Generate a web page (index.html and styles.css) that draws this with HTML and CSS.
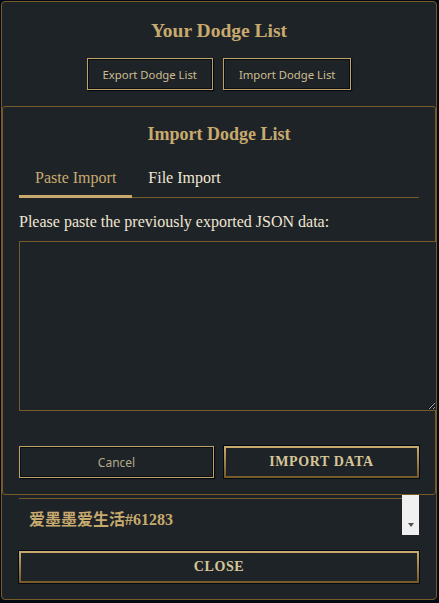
FILE: index.html
```html
<!DOCTYPE html>
<html lang="en">
<head>
    <meta charset="UTF-8">
    <meta name="viewport" content="width=device-width, initial-scale=1.0">
    <title>Dodge List</title>
    <link rel="stylesheet" href="styles.css">
</head>
<body>
    <div class="dodge-panel">
        <!-- Header -->
        <div class="panel-header">
            <h1>Your Dodge List</h1>
            <div class="header-buttons">
                <button class="small-btn">Export Dodge List</button>
                <button class="small-btn">Import Dodge List</button>
            </div>
        </div>

        <!-- Dodge List -->
        <div class="dodge-list">
            <div class="list-items">
                <div class="list-item">爱墨墨爱生活#61283</div>
            </div>
            <div class="scrollbar"><span class="scroll-arrow"></span></div>
        </div>

        <button class="gold-btn">Close</button>

        <!-- Import Modal -->
        <div class="import-modal">
            <h2>Import Dodge List</h2>
            <div class="tabs">
                <div class="tab active">Paste Import</div>
                <div class="tab">File Import</div>
            </div>
            <label class="paste-label" for="importData">Please paste the previously exported JSON data:</label>
            <textarea id="importData"></textarea>
            <div class="modal-buttons">
                <button class="small-btn">Cancel</button>
                <button class="gold-btn">Import Data</button>
            </div>
        </div>
    </div>
</body>
</html>
```

FILE: styles.css
```css
* {
    box-sizing: border-box;
}

body {
    margin: 0;
    background: #010a13;
    font-family: "Liberation Serif", "Noto Sans CJK SC", serif;
}

.dodge-panel {
    position: relative;
    width: 436px;
    height: 599px;
    margin: 1px 0 0 1px;
    padding: 0 17px 16px;
    display: flex;
    flex-direction: column;
    background: #1e2328;
    border: 1px solid #785a28;
    border-radius: 4px;
}

.panel-header {
    padding: 17px 0 16px;
    text-align: center;
}

.panel-header h1 {
    margin: 0;
    font-size: 19.5px;
    line-height: 24px;
    color: #c8aa6e;
}

.header-buttons {
    margin-top: 15px;
    display: flex;
    justify-content: center;
    gap: 10px;
}

/* Buttons */
.small-btn {
    height: 32px;
    padding: 0 15px;
    background: #1e2328;
    color: #cdbe91;
    border: 1px solid #c0a264;
    box-shadow: inset 0 0 0 1px #0a0e13, 1px 1px 1px #010a13;
    font-family: "Noto Sans", sans-serif;
    font-size: 11.3px;
    cursor: pointer;
}

.gold-btn {
    height: 32px;
    padding: 0;
    background: #1e2328;
    color: #d6c597;
    border: 2px solid #c8aa6e;
    border-image: linear-gradient(to bottom, #c8aa6e, #785a28) 1;
    box-shadow: 0 0 0 1px #010a13;
    font-family: "Liberation Serif", serif;
    font-weight: bold;
    font-size: 14px;
    letter-spacing: 0.6px;
    text-transform: uppercase;
    cursor: pointer;
}

.dodge-panel > .gold-btn {
    margin-top: 16px;
}

/* List */
.dodge-list {
    flex: 1;
    min-height: 0;
    display: flex;
}

.list-items {
    flex: 1;
    display: flex;
    flex-direction: column;
    justify-content: flex-end;
    overflow: hidden;
}

.list-item {
    padding: 11px 10px 5px;
    border-top: 1px solid #785a28;
    font-size: 16px;
    line-height: 20px;
    font-weight: bold;
    color: #c8aa6e;
}

.scrollbar {
    width: 17px;
    padding-bottom: 8px;
    display: flex;
    flex-direction: column;
    justify-content: flex-end;
    align-items: center;
    background: #f0f0f0;
}

.scroll-arrow {
    width: 0;
    height: 0;
    border-left: 3px solid transparent;
    border-right: 3px solid transparent;
    border-top: 4px solid #505050;
}

/* Import Modal */
.import-modal {
    position: absolute;
    top: 104px;
    left: 0;
    right: 0;
    padding: 0 16px 16px;
    background: #1e2328;
    border: 1px solid #785a28;
    border-radius: 3px;
}

.import-modal h2 {
    margin: 0;
    padding-top: 16px;
    font-size: 18px;
    line-height: 22px;
    color: #c8aa6e;
    text-align: center;
}

.tabs {
    margin-top: 13px;
    display: flex;
    border-bottom: 1px solid #785a28;
}

.tab {
    padding: 10px 16px 7px;
    margin-bottom: -1px;
    border-bottom: 3px solid transparent;
    font-size: 16px;
    line-height: 20px;
    color: #f0e6d2;
    cursor: pointer;
}

.tab.active {
    color: #c8aa6e;
    border-bottom-color: #c8aa6e;
}

.paste-label {
    display: block;
    margin-top: 14px;
    font-size: 16px;
    line-height: 20px;
    color: #f0e6d2;
}

.import-modal textarea {
    display: block;
    box-sizing: content-box;
    width: 100%;
    height: 152px;
    margin-top: 9px;
    padding: 8px;
    background: #1e2328;
    color: #f0e6d2;
    border: 1px solid #785a28;
    outline: none;
}

.modal-buttons {
    margin-top: 35px;
    display: grid;
    grid-template-columns: 1fr 1fr;
    gap: 10px;
}

.modal-buttons .small-btn {
    color: #b5aa8a;
    font-size: 12px;
}
```
